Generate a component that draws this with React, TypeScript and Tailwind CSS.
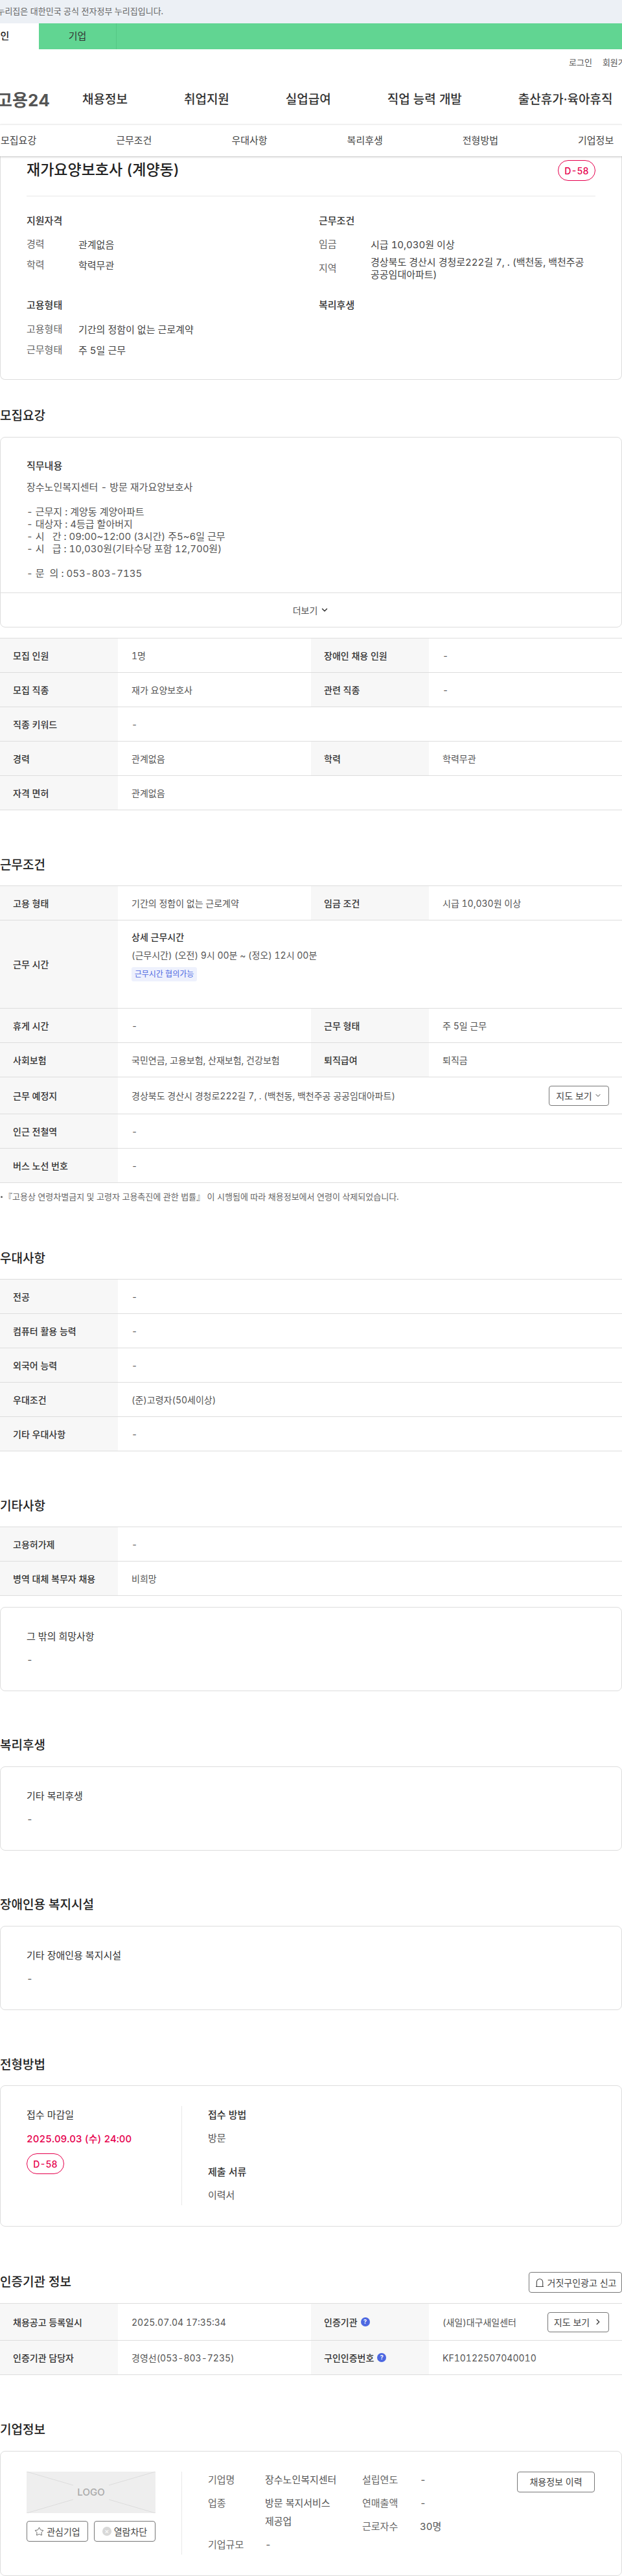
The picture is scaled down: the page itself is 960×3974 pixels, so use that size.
import type { ReactNode } from "react";
import { ChevronDown, ChevronRight, Star } from "lucide-react";

const subNav = ["모집요강", "근무조건", "우대사항", "복리후생", "전형방법", "기업정보"];
const mainNav = ["채용정보", "취업지원", "실업급여", "직업 능력 개발", "출산휴가·육아휴직"];

const jobText = `장수노인복지센터 - 방문 재가요양보호사

- 근무지 : 계양동 계양아파트
- 대상자 : 4등급 할아버지
- 시   간 : 09:00~12:00 (3시간) 주5~6일 근무
- 시   급 : 10,030원(기타수당 포함 12,700원)

- 문  의 : 053-803-7135`;

function Heading({ children }: { children: ReactNode }) {
  return <h2 className="h-[32px] text-[19px] leading-[32px] font-medium text-[#222]">{children}</h2>;
}

function Th({ children }: { children: ReactNode }) {
  return (
    <div className="w-[182px] shrink-0 self-stretch flex items-center gap-[5px] bg-[#f7f7f7] pl-[20px] text-[14px] font-medium text-[#333]">
      {children}
    </div>
  );
}

function Td({ children, wide }: { children: ReactNode; wide?: boolean }) {
  return (
    <div className={`${wide ? "flex-1" : "w-[298px] shrink-0"} pl-[21px] pr-[20px] text-[14px] text-[#555]`}>
      {children}
    </div>
  );
}

function Row({ h = "h-[53px]", children }: { h?: string; children: ReactNode }) {
  return <div className={`${h} flex items-center border-b border-[#ddd]`}>{children}</div>;
}

function Row2({ a, b, c, d }: { a: string; b: string; c: ReactNode; d: string }) {
  return (
    <Row>
      <Th>{a}</Th>
      <Td>{b}</Td>
      <Th>{c}</Th>
      <Td>{d}</Td>
    </Row>
  );
}

function Row1({ a, b }: { a: string; b: string }) {
  return (
    <Row>
      <Th>{a}</Th>
      <Td wide>{b}</Td>
    </Row>
  );
}

function Table({ children }: { children: ReactNode }) {
  return <div className="border-t border-[#ddd]">{children}</div>;
}

function Card({ children, className = "" }: { children: ReactNode; className?: string }) {
  return <div className={`rounded-[8px] border border-[#ddd] bg-white ${className}`}>{children}</div>;
}

function InfoLine({ label, children, className = "" }: { label: string; children: ReactNode; className?: string }) {
  return (
    <div className={`flex items-center min-h-[32px] ${className}`}>
      <span className="w-[80px] shrink-0 text-[15px] text-[#666]">{label}</span>
      <span className="text-[15px] leading-[19px] text-[#444]">{children}</span>
    </div>
  );
}

function SimpleCard({ title }: { title: string }) {
  return (
    <Card className="h-[130px] px-[40px] pt-[35px]">
      <p className="text-[15px] leading-[20px] text-[#333]">{title}</p>
      <p className="mt-[16px] text-[15px] leading-[20px] text-[#555]">-</p>
    </Card>
  );
}

function BadgeD() {
  return (
    <span className="flex h-[32px] w-[58px] items-center justify-center rounded-full border border-[#e6004d] text-[14px] font-medium text-[#e6004d]">
      D-58
    </span>
  );
}

function Help() {
  return (
    <span className="flex h-[14px] w-[14px] items-center justify-center rounded-full bg-[#4d68e1] text-[9px] font-bold text-white">
      ?
    </span>
  );
}

function OutlineBtn({ children, className = "" }: { children: ReactNode; className?: string }) {
  return (
    <span className={`flex items-center justify-center rounded-[4px] border border-[#777] bg-white text-[14px] text-[#444] ${className}`}>
      {children}
    </span>
  );
}

export default function App() {
  return (
    <div className="w-[960px] h-[3974px] overflow-hidden bg-white tabular-nums font-['Inter','Noto_Sans_CJK_KR','Noto_Sans',sans-serif]">
      {/* top notice */}
      <div className="h-[36px] flex items-center bg-[#ecf0f5] text-[13px] text-[#666] whitespace-nowrap">
        <span className="-ml-[20px]">이 누리집은 대한민국 공식 전자정부 누리집입니다.</span>
      </div>

      {/* user type tabs */}
      <div className="h-[40px] flex bg-[#61d592] text-[15px] text-[#333]">
        <div className="-ml-[59px] w-[119px] shrink-0 flex items-center justify-center bg-white font-medium text-[#222]">개인</div>
        <div className="w-[120px] flex items-center justify-center border-r border-[#55c785]">기업</div>
      </div>

      {/* header */}
      <div className="h-[116px] whitespace-nowrap">
        <div className="flex gap-[16px] pl-[878px] pt-[11px] text-[13px] leading-[18px] text-[#555]">
          <span>로그인</span>
          <span>회원가입</span>
        </div>
        <div className="mt-[32px] flex items-center h-[34px]">
          <span className="-ml-[5px] w-[132px] shrink-0 text-[26px] font-bold text-[#555]">고용24</span>
          <div className="flex gap-[87px] text-[19px] font-medium text-[#333]">
            {mainNav.map((item) => (
              <span key={item}>{item}</span>
            ))}
          </div>
        </div>
      </div>

      {/* section tabs */}
      <div className="relative z-10 h-[49px] flex items-center gap-[123px] border-t border-[#eee] pl-[1px] text-[15px] text-[#444] shadow-[0_1px_3px_rgba(0,0,0,0.25)] whitespace-nowrap">
        {subNav.map((item) => (
          <span key={item}>{item}</span>
        ))}
      </div>

      {/* summary card */}
      <div className="h-[345px] rounded-b-[8px] border-x border-b border-[#ddd] px-[40px]">
        <div className="flex justify-between h-[62px] border-b border-[#e8e8e8]">
          <h1 className="text-[23px] leading-[42px] font-medium text-[#222]">재가요양보호사 (계양동)</h1>
          <div className="pt-[6px]">
            <BadgeD />
          </div>
        </div>
        <div className="grid grid-cols-[451px_1fr] pt-[26px]">
          <div className="h-[130px]">
            <p className="text-[15px] leading-[24px] font-medium text-[#333]">지원자격</p>
            <div className="mt-[8px]">
              <InfoLine label="경력">관계없음</InfoLine>
              <InfoLine label="학력">학력무관</InfoLine>
            </div>
          </div>
          <div>
            <p className="text-[15px] leading-[24px] font-medium text-[#333]">근무조건</p>
            <div className="mt-[8px]">
              <InfoLine label="임금">시급 10,030원 이상</InfoLine>
              <InfoLine label="지역" className="mt-[2px]">
                경상북도 경산시 경청로222길 7, . (백천동, 백천주공
                <br />
                공공임대아파트)
              </InfoLine>
            </div>
          </div>
          <div>
            <p className="text-[15px] leading-[24px] font-medium text-[#333]">고용형태</p>
            <div className="mt-[9px]">
              <InfoLine label="고용형태">기간의 정함이 없는 근로계약</InfoLine>
              <InfoLine label="근무형태">주 5일 근무</InfoLine>
            </div>
          </div>
          <div>
            <p className="text-[15px] leading-[24px] font-medium text-[#333]">복리후생</p>
          </div>
        </div>
      </div>

      {/* 모집요강 */}
      <section className="mt-[40px]">
        <Heading>모집요강</Heading>
        <Card className="mt-[16px]">
          <div className="h-[239px] px-[40px] pt-[34px]">
            <p className="text-[15px] leading-[20px] font-medium text-[#333]">직무내용</p>
            <p className="mt-[13px] whitespace-pre-wrap text-[15px] leading-[19px] text-[#555]">{jobText}</p>
          </div>
          <div className="h-[53px] flex items-center justify-center gap-[4px] border-t border-[#ddd] text-[14px] text-[#555]">
            더보기 <ChevronDown className="size-[14px] text-[#333]" strokeWidth={2.5} />
          </div>
        </Card>
        <div className="mt-[16px]">
          <Table>
            <Row2 a="모집 인원" b="1명" c="장애인 채용 인원" d="-" />
            <Row2 a="모집 직종" b="재가 요양보호사" c="관련 직종" d="-" />
            <Row1 a="직종 키워드" b="-" />
            <Row2 a="경력" b="관계없음" c="학력" d="학력무관" />
            <Row1 a="자격 면허" b="관계없음" />
          </Table>
        </div>
      </section>

      {/* 근무조건 */}
      <section className="mt-[69px]">
        <Heading>근무조건</Heading>
        <div className="mt-[15px]">
          <Table>
            <Row2 a="고용 형태" b="기간의 정함이 없는 근로계약" c="임금 조건" d="시급 10,030원 이상" />
            <Row h="h-[136px]">
              <Th>근무 시간</Th>
              <div className="flex-1 self-start pl-[21px] pt-[16px] text-[14px] text-[#555]">
                <p className="leading-[20px] font-medium text-[#333]">상세 근무시간</p>
                <p className="mt-[8px] leading-[20px]">(근무시간) (오전) 9시 00분 ~ (정오) 12시 00분</p>
                <span className="mt-[8px] inline-flex h-[22px] w-[101px] items-center justify-center rounded-[3px] bg-[#eef1fd] text-[12px] text-[#4d68e1]">
                  근무시간 협의가능
                </span>
              </div>
            </Row>
            <Row2 a="휴게 시간" b="-" c="근무 형태" d="주 5일 근무" />
            <Row2 a="사회보험" b="국민연금, 고용보험, 산재보험, 건강보험" c="퇴직급여" d="퇴직금" />
            <Row h="h-[57px]">
              <Th>근무 예정지</Th>
              <Td wide>경상북도 경산시 경청로222길 7, . (백천동, 백천주공 공공임대아파트)</Td>
              <OutlineBtn className="mr-[20px] h-[31px] w-[93px] shrink-0 gap-[3px]">
                지도 보기 <ChevronDown className="size-[12px]" />
              </OutlineBtn>
            </Row>
            <Row1 a="인근 전철역" b="-" />
            <Row1 a="버스 노선 번호" b="-" />
          </Table>
        </div>
        <p className="mt-[11px] flex items-center gap-[2px] text-[13px] leading-[20px] text-[#666] whitespace-nowrap">
          <span className="size-[3px] rounded-full bg-[#666] ml-[1px]" />
          『고용상 연령차별금지 및 고령자 고용촉진에 관한 법률』 이 시행됨에 따라 채용정보에서 연령이 삭제되었습니다.
        </p>
      </section>

      {/* 우대사항 */}
      <section className="mt-[70px]">
        <Heading>우대사항</Heading>
        <div className="mt-[15px]">
          <Table>
            <Row1 a="전공" b="-" />
            <Row1 a="컴퓨터 활용 능력" b="-" />
            <Row1 a="외국어 능력" b="-" />
            <Row1 a="우대조건" b="(준)고령자(50세이상)" />
            <Row1 a="기타 우대사항" b="-" />
          </Table>
        </div>
      </section>

      {/* 기타사항 */}
      <section className="mt-[69px]">
        <Heading>기타사항</Heading>
        <div className="mt-[15px]">
          <Table>
            <Row1 a="고용허가제" b="-" />
            <Row1 a="병역 대체 복무자 채용" b="비희망" />
          </Table>
        </div>
        <div className="mt-[17px]">
          <SimpleCard title="그 밖의 희망사항" />
        </div>
      </section>

      <section className="mt-[68px]">
        <Heading>복리후생</Heading>
        <div className="mt-[16px]">
          <SimpleCard title="기타 복리후생" />
        </div>
      </section>

      <section className="mt-[68px]">
        <Heading>장애인용 복지시설</Heading>
        <div className="mt-[16px]">
          <SimpleCard title="기타 장애인용 복지시설" />
        </div>
      </section>

      {/* 전형방법 */}
      <section className="mt-[69px]">
        <Heading>전형방법</Heading>
        <Card className="mt-[15px] h-[218px] px-[40px] pt-[31px]">
          <div className="flex h-[153px]">
            <div className="w-[240px] border-r border-[#e8e8e8] pt-[4px]">
              <p className="text-[15px] leading-[20px] text-[#333]">접수 마감일</p>
              <p className="mt-[17px] text-[15px] leading-[20px] font-medium text-[#e6004d]">2025.09.03 (수) 24:00</p>
              <div className="mt-[12px]">
                <BadgeD />
              </div>
            </div>
            <div className="pl-[40px] pt-[4px]">
              <p className="text-[15px] leading-[20px] font-medium text-[#333]">접수 방법</p>
              <p className="mt-[16px] text-[15px] leading-[20px] text-[#555]">방문</p>
              <p className="mt-[32px] text-[15px] leading-[20px] font-medium text-[#333]">제출 서류</p>
              <p className="mt-[16px] text-[15px] leading-[20px] text-[#555]">이력서</p>
            </div>
          </div>
        </Card>
      </section>

      {/* 인증기관 정보 */}
      <section className="mt-[70px]">
        <div className="flex items-center justify-between">
          <Heading>인증기관 정보</Heading>
          <OutlineBtn className="h-[32px] w-[144px] gap-[4px]">
            <svg width="16" height="16" viewBox="0 0 16 16" fill="none" stroke="#444" strokeWidth="1.1">
              <path d="M2 14.5h12M3.3 14.5V7.5a4.7 4.7 0 0 1 9.4 0v7" />
            </svg>
            거짓구인광고 신고
          </OutlineBtn>
        </div>
        <div className="mt-[16px]">
          <Table>
            <Row h="h-[57px]">
              <Th>채용공고 등록일시</Th>
              <Td>2025.07.04 17:35:34</Td>
              <Th>
                인증기관 <Help />
              </Th>
              <Td wide>(새일)대구새일센터</Td>
              <OutlineBtn className="mr-[20px] h-[31px] w-[95px] shrink-0 gap-[6px]">
                지도 보기 <ChevronRight className="size-[14px]" strokeWidth={2.5} />
              </OutlineBtn>
            </Row>
            <Row2
              a="인증기관 담당자"
              b="경영선(053-803-7235)"
              c={
                <>
                  구인인증번호 <Help />
                </>
              }
              d="KF10122507040010"
            />
          </Table>
        </div>
      </section>

      {/* 기업정보 */}
      <section className="mt-[69px]">
        <Heading>기업정보</Heading>
        <Card className="mt-[16px] h-[193px] px-[40px] pt-[31px]">
          <div className="flex h-[128px]">
            <div className="w-[240px] shrink-0 border-r border-[#e8e8e8]">
              <div className="relative flex h-[64px] w-[199px] items-center justify-center bg-[#eee]">
                <svg className="absolute inset-0" width="199" height="64" viewBox="0 0 199 64" stroke="#dcdcdc" strokeWidth="1">
                  <path d="M0 0 72 21M199 0 127 21M0 64 72 43M199 64 127 43" />
                </svg>
                <span className="text-[15px] font-medium text-[#aaa]">LOGO</span>
              </div>
              <div className="mt-[12px] flex gap-[9px]">
                <OutlineBtn className="h-[32px] w-[95px] gap-[4px] text-[13px]">
                  <Star className="size-[15px]" strokeWidth={1.3} /> 관심기업
                </OutlineBtn>
                <OutlineBtn className="h-[32px] w-[95px] gap-[4px] text-[13px]">
                  <span className="flex size-[14px] items-center justify-center rounded-full bg-[#d8d8d8] text-[11px] leading-none text-white">×</span>
                  열람차단
                </OutlineBtn>
              </div>
            </div>
            <div className="flex-1 pl-[40px] flex text-[15px] text-[#555] leading-[20px]">
              <div className="w-[238px] shrink-0">
                <div className="mt-[3px] grid grid-cols-[88px_1fr] gap-y-[16px]">
                  <span className="text-[#666]">기업명</span>
                  <span>장수노인복지센터</span>
                  <span className="text-[#666]">업종</span>
                  <span className="leading-[28px] -my-[4px]">
                    방문 복지서비스
                    <br />
                    제공업
                  </span>
                  <span className="text-[#666]">기업규모</span>
                  <span>-</span>
                </div>
              </div>
              <div className="w-[239px] shrink-0">
                <div className="mt-[3px] grid grid-cols-[89px_1fr] gap-y-[16px]">
                  <span className="text-[#666]">설립연도</span>
                  <span>-</span>
                  <span className="text-[#666]">연매출액</span>
                  <span>-</span>
                  <span className="text-[#666]">근로자수</span>
                  <span>30명</span>
                </div>
              </div>
              <OutlineBtn className="h-[32px] w-[120px] shrink-0">채용정보 이력</OutlineBtn>
            </div>
          </div>
        </Card>
      </section>
    </div>
  );
}
